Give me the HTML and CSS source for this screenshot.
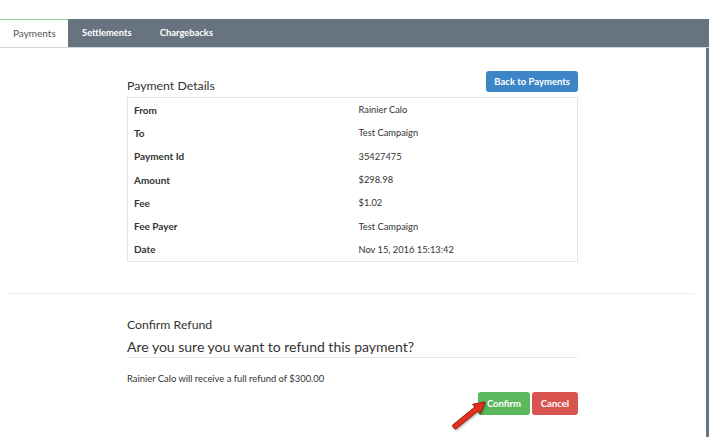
FILE: index.html
```html
<!DOCTYPE html>
<html lang="en">
<head>
    <meta charset="UTF-8">
    <meta name="viewport" content="width=device-width, initial-scale=1.0">
    <title>Payment Details</title>
    <link rel="stylesheet" href="styles.css">
</head>
<body>
    <div class="tabs">
        <div class="tab active">Payments</div>
        <div class="tab">Settlements</div>
        <div class="tab">Chargebacks</div>
    </div>
    <div class="page">
        <div class="panel">
            <div class="panel-head">
                <h3 class="panel-title">Payment Details</h3>
                <button class="btn btn-blue">Back to Payments</button>
            </div>
            <table class="details">
                <tr><td class="label">From</td><td>Rainier Calo</td></tr>
                <tr><td class="label">To</td><td>Test Campaign</td></tr>
                <tr><td class="label">Payment Id</td><td>35427475</td></tr>
                <tr><td class="label">Amount</td><td>$298.98</td></tr>
                <tr><td class="label">Fee</td><td>$1.02</td></tr>
                <tr><td class="label">Fee Payer</td><td>Test Campaign</td></tr>
                <tr><td class="label">Date</td><td>Nov 15, 2016 15:13:42</td></tr>
            </table>
        </div>
        <hr class="divider">
        <div class="panel refund">
            <div class="refund-title">Confirm Refund</div>
            <div class="refund-question">Are you sure you want to refund this payment?</div>
            <p class="refund-note">Rainier Calo will receive a full refund of $300.00</p>
            <div class="actions">
                <button class="btn btn-green">Confirm</button>
                <button class="btn btn-red">Cancel</button>
                <!-- annotation arrow pointing at Confirm -->
                <svg class="arrow" width="40" height="36" viewBox="0 0 40 36">
                    <path d="M1.4 27.3 L23.9 9 L21.7 6.3 L34 4 L29.3 15.6 L27 12.9 L4.6 31.1 Q2.2 30.5 1.4 27.3 Z" fill="#e3301b" stroke="#a11b0c" stroke-width="1" stroke-linejoin="round"/>
                </svg>
            </div>
        </div>
    </div>
</body>
</html>
```

FILE: styles.css
```css
body {
    margin: 0;
    font-family: Lato, "Open Sans", sans-serif;
    color: #333;
    background: #fff;
}
.tabs {
    display: flex;
    margin-top: 19px;
    height: 28px;
    background-color: #67737e;
    border-bottom: 1px solid #cdd5db;
}
.tab {
    padding: 0 14px;
    line-height: 28px;
    font-size: 9.4px;
    font-weight: bold;
    color: #fff;
}
.tab.active {
    width: 42px;
    padding: 0 13px;
    background-color: #fff;
    border-top: 1px solid #86d095;
    line-height: 27px;
    font-size: 10px;
    font-weight: normal;
    color: #555;
}
.page {
    border-right: 3px solid #67737e;
    height: 389px;
    overflow: hidden;
}
.panel {
    width: 451px;
    margin-left: 127px;
}
.panel-head {
    display: flex;
    justify-content: space-between;
    align-items: flex-end;
    padding-top: 23px;
}
.panel-title {
    margin: 0;
    font-size: 12.3px;
    font-weight: normal;
    line-height: 18px;
}
.btn {
    font-family: Lato, "Open Sans", sans-serif;
    font-size: 9.5px;
    font-weight: bold;
    color: #fff;
    border: none;
    border-radius: 3px;
    cursor: pointer;
}
.btn-blue {
    height: 21px;
    padding: 0 8px;
    margin-bottom: 3px;
    background-color: #3d85c6;
}
.details {
    width: 100%;
    margin-top: 2px;
    border: 1px solid #e4e4e4;
    border-collapse: collapse;
    font-size: 9.3px;
}
.details td {
    width: 50%;
    height: 23.3px;
    padding: 0 6px;
    vertical-align: middle;
}
.details .label {
    font-size: 10px;
    font-weight: bold;
}
.divider {
    margin: 31px 12px 0 8px;
    border: none;
    border-top: 1px solid #ececec;
}
.refund-title {
    margin-top: 23px;
    font-size: 12.3px;
    line-height: 16px;
}
.refund-question {
    margin-top: 4px;
    font-size: 14px;
    line-height: 20px;
    border-bottom: 1px solid #e8e8e8;
}
.refund-note {
    margin: 15px 0 0;
    font-size: 9.4px;
    line-height: 12px;
}
.actions {
    position: relative;
    display: flex;
    justify-content: flex-end;
    gap: 2px;
    margin-top: 7px;
}
.btn-green {
    height: 23px;
    width: 52px;
    background-color: #5cb85c;
}
.btn-red {
    height: 23px;
    width: 46px;
    background-color: #d9534f;
}
.arrow {
    position: absolute;
    left: 324px;
    top: 6px;
    filter: drop-shadow(1px 1px 1px rgba(0, 0, 0, 0.35));
}
```
